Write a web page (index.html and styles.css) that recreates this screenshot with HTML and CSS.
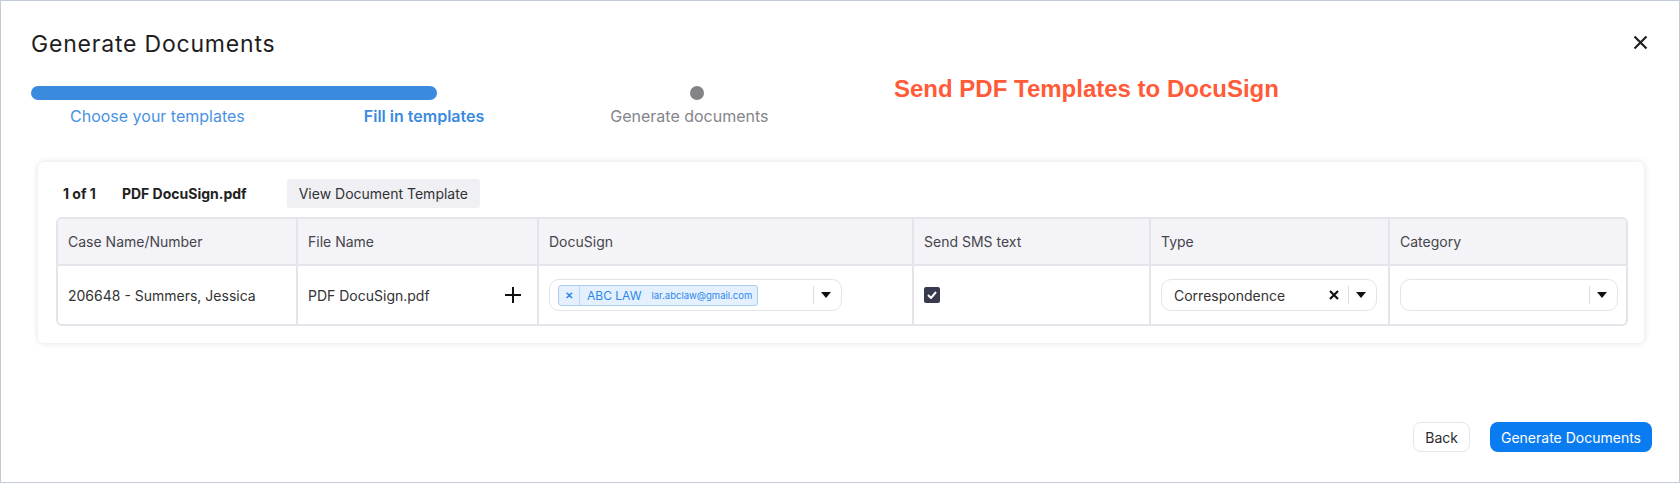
FILE: index.html
```html
<!DOCTYPE html>
<html lang="en">

<head>
    <meta charset="UTF-8">
    <meta name="viewport" content="width=device-width, initial-scale=1.0">
    <title>Generate Documents</title>

    <link rel="stylesheet" href="styles.css">

</head>

<body>

    <div class="dialog">
        <header class="topo">
            <h1 class="titulo">Generate Documents</h1>
            <button class="fechar" aria-label="Close">
                <svg width="15" height="15" viewBox="0 0 15 15">
                    <path d="M1.5 1.5 L13.5 13.5 M13.5 1.5 L1.5 13.5" stroke="#1f1f24" stroke-width="2.2" />
                </svg>
            </button>
        </header>

        <div class="passos">
            <div class="stepper">
                <div class="trilha">
                    <div class="barra"></div>
                    <div class="ponto"></div>
                </div>
                <div class="rotulos">
                    <span class="rotulo feito">Choose your templates</span>
                    <span class="rotulo atual">Fill in templates</span>
                    <span class="rotulo proximo">Generate documents</span>
                </div>
            </div>
            <h2 class="aviso">Send PDF Templates to DocuSign</h2>
        </div>

        <section class="cartao">
            <div class="barraTopo">
                <span class="contador">1 of 1</span>
                <span class="arquivo">PDF DocuSign.pdf</span>
                <button class="btnTemplate">View Document Template</button>
            </div>

            <div class="tabela">
                <div class="cab">Case Name/Number</div>
                <div class="cab">File Name</div>
                <div class="cab">DocuSign</div>
                <div class="cab">Send SMS text</div>
                <div class="cab">Type</div>
                <div class="cab ultima">Category</div>

                <div class="cel">206648 - Summers, Jessica</div>
                <div class="cel nomeArquivo">
                    <span>PDF DocuSign.pdf</span>
                    <svg class="mais" width="18" height="18" viewBox="0 0 18 18">
                        <path d="M9 1 V17 M1 9 H17" stroke="#111" stroke-width="2" />
                    </svg>
                </div>
                <div class="cel">
                    <div class="select docusign">
                        <div class="tag">
                            <span class="tagX">&#x2715;</span>
                            <span class="tagNome">ABC LAW</span>
                            <span class="tagEmail">lar.abclaw@gmail.com</span>
                        </div>
                        <span class="divisor"></span>
                        <span class="seta"></span>
                    </div>
                </div>
                <div class="cel">
                    <span class="check">
                        <svg width="10" height="8" viewBox="0 0 10 8">
                            <path d="M1 4 L4 7 L9 1" stroke="#fff" stroke-width="2" fill="none" />
                        </svg>
                    </span>
                </div>
                <div class="cel">
                    <div class="select">
                        <span class="valor">Correspondence</span>
                        <svg class="limpar" width="10" height="10" viewBox="0 0 10 10">
                            <path d="M1 1 L9 9 M9 1 L1 9" stroke="#111" stroke-width="2.2" />
                        </svg>
                        <span class="divisor"></span>
                        <span class="seta"></span>
                    </div>
                </div>
                <div class="cel ultima">
                    <div class="select">
                        <span class="valor"></span>
                        <span class="divisor"></span>
                        <span class="seta"></span>
                    </div>
                </div>
            </div>
        </section>

        <footer class="rodape">
            <button class="btnVoltar">Back</button>
            <button class="btnGerar">Generate Documents</button>
        </footer>
    </div>

</body>

</html>
```

FILE: styles.css
```css
* {
    box-sizing: border-box;
}

body {
    margin: 0;
    font-family: Inter, "Noto Sans", sans-serif;
    color: #2b2b30;
    background: #fff;
}

button {
    font-family: inherit;
    cursor: pointer;
}

.dialog {
    height: 483px;
    border: 1px solid #c3cbd8;
    display: flex;
    flex-direction: column;
}

.topo {
    display: flex;
    justify-content: space-between;
    align-items: center;
    padding: 29px 31px 0 30px;
}

.titulo {
    margin: 0;
    font-size: 23px;
    font-weight: 400;
    letter-spacing: 0.8px;
    line-height: 28px;
    color: #1e1e22;
}

.fechar {
    border: none;
    background: none;
    padding: 0;
    display: flex;
    margin-top: -4px;
}

.passos {
    display: flex;
    align-items: flex-start;
    padding-left: 30px;
    margin-top: 28px;
}

.stepper {
    width: 800px;
}

.trilha {
    display: flex;
    align-items: center;
    height: 14px;
}

.barra {
    width: 406px;
    height: 14px;
    border-radius: 7px;
    background: #3a8be0;
}

.ponto {
    width: 14px;
    height: 14px;
    border-radius: 50%;
    background: #838388;
    margin-left: 253px;
}

.rotulos {
    display: flex;
    margin-top: 6px;
    font-size: 16px;
    line-height: 20px;
}

.rotulo.feito {
    margin-left: 39px;
    color: #4a92e3;
}

.rotulo.atual {
    margin-left: 119px;
    color: #3a8be0;
    font-weight: 600;
}

.rotulo.proximo {
    margin-left: 126px;
    color: #85858b;
}

.aviso {
    margin: -11px 0 0 63px;
    font-family: "Liberation Sans", Arial, sans-serif;
    font-size: 24px;
    font-weight: 700;
    line-height: 28px;
    color: #ff5b38;
}

.cartao {
    margin: 36px 35px 0 37px;
    padding: 17px 16px 17px 18px;
    border-radius: 6px;
    box-shadow: 0 0 6px rgba(40, 40, 70, 0.14);
}

.barraTopo {
    display: flex;
    align-items: center;
    padding-left: 7px;
    font-size: 14px;
    font-weight: 700;
    color: #222;
}

.arquivo {
    margin-left: 26px;
}

.btnTemplate {
    margin-left: 40px;
    height: 29px;
    padding: 0 12px;
    border: none;
    border-radius: 3px;
    background: #efeff4;
    font-size: 14px;
    color: #333;
}

.tabela {
    margin-top: 9px;
    display: grid;
    grid-template-columns: 240px 241px 375px 237px 239px 239px;
    border: 2px solid #e4e4ea;
    border-radius: 6px;
    overflow: hidden;
}

.cab {
    height: 47px;
    display: flex;
    align-items: center;
    padding-left: 10px;
    background: #f4f3f7;
    border-right: 2px solid #e4e4ea;
    border-bottom: 2px solid #e4e4ea;
    font-size: 14px;
    color: #45454b;
}

.cel {
    height: 58px;
    display: flex;
    align-items: center;
    padding: 0 11px 0 10px;
    border-right: 2px solid #e4e4ea;
    font-size: 14px;
    color: #333;
}

.ultima {
    border-right: none;
}

.nomeArquivo {
    justify-content: space-between;
    padding-right: 15px;
}

.select {
    flex: 1;
    height: 32px;
    display: flex;
    align-items: center;
    border: 1px solid #e3e3ea;
    border-radius: 10px;
    padding: 0 8px 0 12px;
}

.select .valor {
    flex: 1;
}

.docusign {
    flex: none;
    width: 293px;
    padding-left: 8px;
}

.tag {
    display: flex;
    align-items: center;
    height: 21px;
    border: 1px solid #abcdf1;
    border-radius: 3px;
    background: #e4f0fd;
    color: #2c87ec;
    margin-right: auto;
}

.tagX {
    width: 21px;
    height: 100%;
    display: flex;
    align-items: center;
    justify-content: center;
    border-right: 1px solid #bcd8f5;
    font-size: 10px;
    font-weight: 700;
    color: #2c87ec;
}

.tagNome {
    margin-left: 7px;
    font-size: 12px;
}

.tagEmail {
    margin: 0 5px 0 10px;
    font-size: 9.5px;
}

.limpar {
    margin-right: 9px;
}

.divisor {
    width: 1px;
    height: 18px;
    background: #dcdce2;
}

.seta {
    width: 0;
    height: 0;
    margin: 0 2px 0 7px;
    border-left: 5px solid transparent;
    border-right: 5px solid transparent;
    border-top: 6px solid #111;
}

.check {
    width: 16px;
    height: 16px;
    border-radius: 2px;
    background: #383b4d;
    display: flex;
    align-items: center;
    justify-content: center;
}

.rodape {
    margin-top: auto;
    display: flex;
    justify-content: flex-end;
    gap: 20px;
    padding: 0 27px 30px 0;
}

.btnVoltar {
    height: 30px;
    padding: 0 11px;
    border: 1px solid #e6e6ee;
    border-radius: 8px;
    background: #fff;
    font-size: 14px;
    color: #2b2b30;
}

.btnGerar {
    height: 30px;
    padding: 0 11px;
    border: none;
    border-radius: 8px;
    background: #0a7cf2;
    font-size: 14px;
    color: #fff;
}
```
